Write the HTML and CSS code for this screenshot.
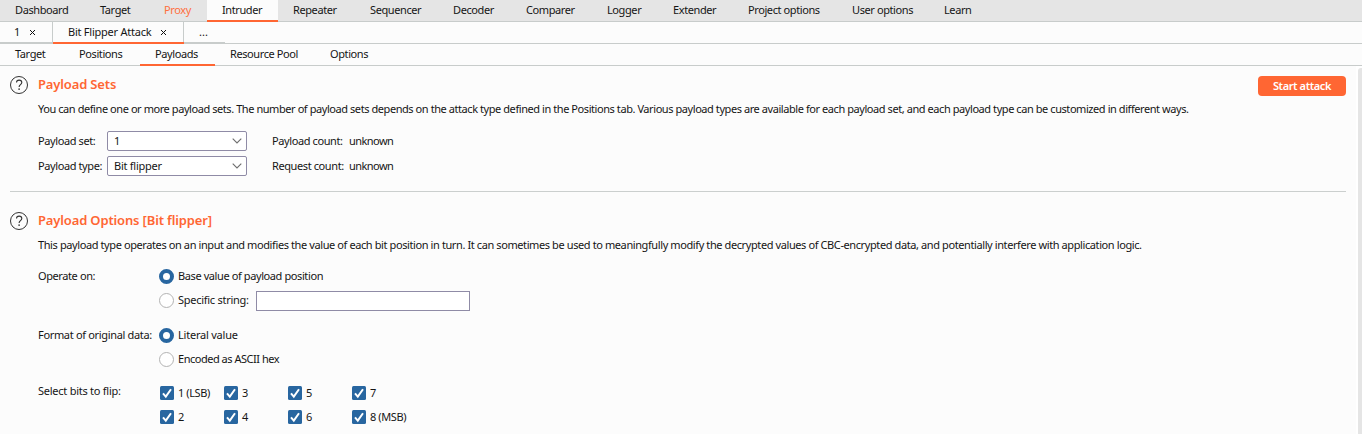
FILE: index.html
```html
<!DOCTYPE html>
<html lang="en">
<head>
<meta charset="utf-8">
<title>Intruder</title>
<link rel="stylesheet" href="styles.css">
</head>
<body>
<svg class="defs" width="0" height="0">
  <symbol id="help" viewBox="0 0 18 18">
    <circle cx="9" cy="9" r="8.500" fill="none" stroke="#333" stroke-width="1"/>
    <path d="M6.500 6.500C6.500 4.900 7.600 4.100 9.100 4.100c1.600 0 2.700.9 2.700 2.400 0 2.100-2.700 2.200-2.700 4.500" fill="none" stroke="#333" stroke-width="1.100"/>
    <rect x="8.400" y="12.400" width="1.400" height="1.500" fill="#333"/>
  </symbol>
  <symbol id="close" viewBox="0 0 5 5"><path d="M0 0L5 5M5 0L0 5" stroke="#111" stroke-width="1" fill="none"/></symbol>
  <symbol id="chevron" viewBox="0 0 10 6"><path d="M.7.6L5 5L9.300.6" stroke="#6e6e6e" stroke-width="1.100" fill="none"/></symbol>
  <symbol id="check" viewBox="0 0 14 14"><rect width="14" height="14" rx="1.500" fill="#2866a0"/><path d="M3 7.400L5.800 10.600L11 3.200" stroke="#fff" stroke-width="2" fill="none"/></symbol>
</svg>
<nav class="main-tabs">
  <span class="tab">Dashboard</span><span class="tab">Target</span><span class="tab alert">Proxy</span><span class="tab active">Intruder</span><span class="tab">Repeater</span><span class="tab">Sequencer</span><span class="tab">Decoder</span><span class="tab">Comparer</span><span class="tab">Logger</span><span class="tab">Extender</span><span class="tab">Project options</span><span class="tab">User options</span><span class="tab">Learn</span>
</nav>
<nav class="attack-tabs">
  <span class="tab">1<svg class="close"><use href="#close"/></svg></span><span class="tab active">Bit Flipper Attack<svg class="close"><use href="#close"/></svg></span><span class="tab">...</span>
</nav>
<nav class="sub-tabs">
  <span class="tab">Target</span><span class="tab">Positions</span><span class="tab active">Payloads</span><span class="tab">Resource Pool</span><span class="tab">Options</span>
</nav>
<div class="content">
  <main class="panel">
    <section class="section sets">
      <svg class="help"><use href="#help"/></svg>
      <div class="body">
        <header class="head"><h2>Payload Sets</h2><button class="start">Start attack</button></header>
        <p class="desc">You can define one or more payload sets. The number of payload sets depends on the attack type defined in the Positions tab. Various payload types are available for each payload set, and each payload type can be customized in different ways.</p>
        <div class="set-grid">
          <span>Payload set:</span><div class="select">1<svg class="chevron"><use href="#chevron"/></svg></div><span class="count">Payload count:</span><span class="value">unknown</span>
          <span>Payload type:</span><div class="select">Bit flipper<svg class="chevron"><use href="#chevron"/></svg></div><span class="count">Request count:</span><span class="value">unknown</span>
        </div>
      </div>
    </section>
    <section class="section options">
      <svg class="help"><use href="#help"/></svg>
      <div class="body">
        <header class="head"><h2>Payload Options [Bit flipper]</h2></header>
        <p class="desc">This payload type operates on an input and modifies the value of each bit position in turn. It can sometimes be used to meaningfully modify the decrypted values of CBC-encrypted data, and potentially interfere with application logic.</p>
        <div class="field operate">
          <span>Operate on:</span>
          <div class="choices">
            <label class="choice"><i class="radio on"></i>Base value of payload position</label>
            <label class="choice"><i class="radio"></i><span class="string-label">Specific string:</span><input class="text" type="text"></label>
          </div>
        </div>
        <div class="field format">
          <span class="format-label">Format of original data:</span>
          <div class="choices">
            <label class="choice literal"><i class="radio on"></i>Literal value</label>
            <label class="choice encoded"><i class="radio"></i>Encoded as ASCII hex</label>
          </div>
        </div>
        <div class="field bits">
          <span class="bits-label">Select bits to flip:</span>
          <div class="bit-grid">
            <label class="bit"><svg class="check"><use href="#check"/></svg>1 (LSB)</label>
            <label class="bit"><svg class="check"><use href="#check"/></svg>3</label>
            <label class="bit"><svg class="check"><use href="#check"/></svg>5</label>
            <label class="bit"><svg class="check"><use href="#check"/></svg>7</label>
            <label class="bit"><svg class="check"><use href="#check"/></svg>2</label>
            <label class="bit"><svg class="check"><use href="#check"/></svg>4</label>
            <label class="bit"><svg class="check"><use href="#check"/></svg>6</label>
            <label class="bit"><svg class="check"><use href="#check"/></svg>8 (MSB)</label>
          </div>
        </div>
      </div>
    </section>
  </main>
  <div class="scrollbar"><div class="thumb"></div></div>
</div>
</body>
</html>
```
FILE: styles.css
```css
* { box-sizing: border-box; }
body {
  margin: 0;
  height: 434px;
  overflow: hidden;
  display: flex;
  flex-direction: column;
  background: #fcfcfc;
  color: #151515;
  font-family: "Noto Sans", sans-serif;
  font-size: 11px;
  letter-spacing: -0.4px;
  line-height: 16px;
  white-space: nowrap;
}
.defs { display: none; }
nav {
  display: flex;
  flex: none;
  height: 22px;
  border-bottom: 1px solid #c8cccb;
}
.tab { height: 22px; padding: 2px 0 0 15px; flex: none; }
.tab.active { border-bottom: 2px solid #ff6633; }

.main-tabs { background: #e5e5e5; }
.main-tabs .active { background: #fcfcfc; }
.main-tabs .alert { color: #ff6f40; }
.main-tabs .tab:nth-child(1) { width: 85px; }
.main-tabs .tab:nth-child(2) { width: 64px; }
.main-tabs .tab:nth-child(3) { width: 58px; }
.main-tabs .tab:nth-child(4) { width: 71px; }
.main-tabs .tab:nth-child(5) { width: 77px; }
.main-tabs .tab:nth-child(6) { width: 83px; }
.main-tabs .tab:nth-child(7) { width: 73px; }
.main-tabs .tab:nth-child(8) { width: 81px; }
.main-tabs .tab:nth-child(9) { width: 66px; }
.main-tabs .tab:nth-child(10) { width: 75px; }
.main-tabs .tab:nth-child(11) { width: 104px; }
.main-tabs .tab:nth-child(12) { width: 92px; }

.attack-tabs .tab { display: flex; border-bottom: 2px solid #c8cccb; }
.attack-tabs .tab.active { border-bottom-color: #ff6633; letter-spacing: -0.24px; }
.attack-tabs .tab:nth-child(1) { width: 53px; padding-left: 14px; border-right: 1px solid #c8cccb; }
.attack-tabs .tab:nth-child(2) { width: 131px; box-shadow: inset -1px 0 #c8cccb; }
.attack-tabs .tab:nth-child(3) { width: 41px; letter-spacing: 0; }
.close { width: 5px; height: 5px; margin: 6px 0 0 10px; }

.sub-tabs .tab:nth-child(1) { width: 64px; }
.sub-tabs .tab:nth-child(2) { width: 76px; }
.sub-tabs .tab:nth-child(3) { width: 75px; }
.sub-tabs .tab:nth-child(4) { width: 100px; }

.content { display: flex; flex: 1; min-height: 0; }
.panel { flex: 1; padding: 10px 10px 0; }
.scrollbar { width: 6px; padding: 2px 0 0 2px; background: #fff; }
.thumb { height: 100%; background: #e5e5e5; border-top-left-radius: 3px; }
.section { display: flex; gap: 10px; }
.sets { height: 116px; border-bottom: 1px solid #cbcfce; }
.options { padding-top: 20px; }
.help { width: 18px; height: 18px; flex: none; }
.body { flex: 1; min-width: 0; }
.head { display: flex; justify-content: space-between; height: 20px; }
h2 {
  margin: 0;
  font-size: 13px;
  font-weight: 600;
  letter-spacing: -0.15px;
  line-height: 16px;
  color: #ff6633;
}
.start {
  width: 88px;
  height: 20px;
  padding: 0;
  border: 0;
  border-radius: 4px;
  background: #ff6633;
  color: #fff;
  font: 600 11px/20px "Noto Sans", sans-serif;
  letter-spacing: -0.4px;
}
.desc { margin: 5px 0 0; letter-spacing: -0.431px; }
.options .desc { letter-spacing: -0.4px; }
.set-grid {
  display: grid;
  grid-template-columns: 69px 140px 102px auto;
  grid-auto-rows: 20px;
  row-gap: 5px;
  align-items: center;
  margin-top: 14px;
}
.count { padding-left: 25px; }
.value { letter-spacing: -0.55px; }
.select {
  display: flex;
  align-items: center;
  justify-content: space-between;
  height: 20px;
  padding: 0 4px 0 6px;
  border: 1px solid #8f8ba6;
  border-radius: 2px;
  background: #fff;
  letter-spacing: -0.25px;
}
.chevron { width: 10px; height: 6px; }
.field { display: grid; grid-template-columns: 121px auto; }
.choices { display: grid; grid-auto-rows: 24px; }
.choice { display: flex; align-items: center; }
.literal { letter-spacing: -0.22px; }
.encoded { letter-spacing: -0.48px; }
.operate { margin-top: 11px; line-height: 24px; }
.format { margin-top: 11px; line-height: 24px; }
.radio {
  width: 15px;
  height: 15px;
  margin-right: 4px;
  border: 1px solid #b3b3b3;
  border-radius: 50%;
  background: #fff;
}
.radio.on { border: 4px solid #2866a0; }
.string-label { width: 78px; letter-spacing: -0.27px; }
.text {
  width: 214px;
  height: 20px;
  margin: 2px 0 0;
  padding: 0 4px;
  border: 1px solid #8f8ba6;
  background: #fff;
}
.format-label { letter-spacing: -0.33px; }
.bits { margin-top: 10px; line-height: 20px; }
.bits-label { letter-spacing: -0.25px; }
.bit-grid { display: grid; grid-template-columns: repeat(4, 64px); grid-auto-rows: 24px; }
.bit { display: flex; align-items: center; }
.check { width: 14px; height: 14px; margin: 0 4px 0 1px; }
```
